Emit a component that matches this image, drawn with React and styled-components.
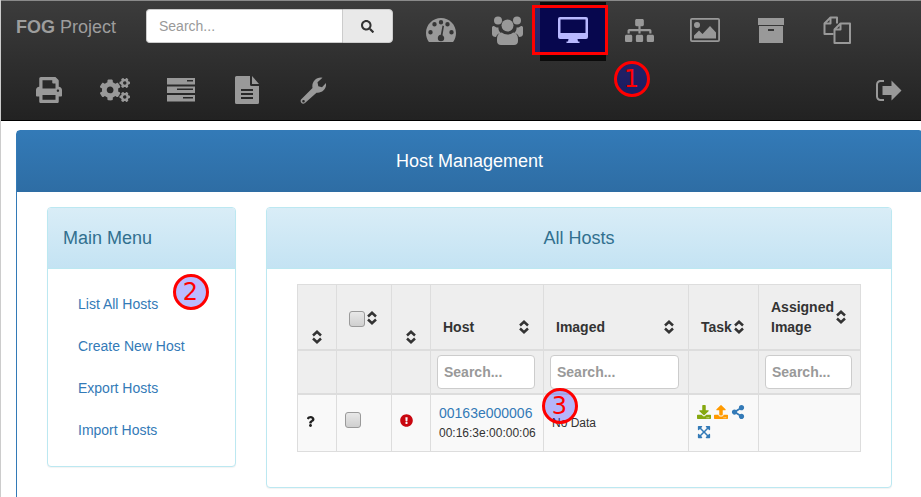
import React from 'react';
import styled, { createGlobalStyle } from 'styled-components';
import {
  FaSearch, FaSitemap, FaPrint, FaCogs,
  FaQuestion, FaExclamationCircle, FaDownload, FaUpload, FaShareAlt, FaExpandArrowsAlt,
} from 'react-icons/fa';

const GlobalStyle = createGlobalStyle`
  html, body { margin: 0; padding: 0; background: #fff; }
  body {
    width: 921px;
    height: 497px;
    overflow: hidden;
    font-family: "Liberation Sans", Arial, sans-serif;
    font-size: 14px;
    color: #333;
  }
  * { box-sizing: border-box; }
`;

const Page = styled.div`
  position: relative;
  width: 921px;
  height: 497px;
  overflow: hidden;
  border-left: 1px solid #ccc;
`;

const Navbar = styled.nav`
  height: 121px;
  border-top: 1px solid #8a8a8a;
  border-bottom: 1px solid #000;
  background: linear-gradient(to bottom, #3c3c3c 0, #222 100%);
`;

const NavRow = styled.div`
  display: flex;
  height: 60px;
  padding-left: ${p => p.$indent || 0}px;
`;

const Brand = styled.a`
  flex: none;
  width: 145px;
  padding: 16px 0 0 15px;
  font-size: 18px;
  line-height: 20px;
  color: #9d9d9d;
  b { font-weight: bold; }
`;

const SearchGroup = styled.div`
  flex: none;
  display: flex;
  width: 247px;
  height: 34px;
  margin: 8px 15px 0 0;
`;

const SearchInput = styled.input`
  width: 196px;
  height: 34px;
  padding: 6px 12px;
  border: 1px solid #ccc;
  border-right: 0;
  border-radius: 4px 0 0 4px;
  background: #fff;
  font: 14px "Liberation Sans", Arial, sans-serif;
  outline: none;
  &::placeholder { color: #999; opacity: 1; }
`;

const SearchButton = styled.button`
  width: 51px;
  height: 34px;
  padding: 0;
  border: 1px solid #ccc;
  border-radius: 0 4px 4px 0;
  background: #e9e9e9;
  color: #333;
  font-size: 13px;
  display: flex;
  align-items: center;
  justify-content: center;
`;

const NavItem = styled.a`
  flex: none;
  width: 66px;
  height: 59px;
  margin-top: 1px;
  padding-bottom: 3px;
  display: flex;
  align-items: center;
  justify-content: center;
  color: ${p => (p.$active ? '#fff' : '#999')};
  background: ${p => (p.$active ? '#0a0a0a' : 'transparent')};
`;

const LogoutItem = styled(NavItem)`
  margin-left: auto;
  width: 64px;
`;

const Content = styled.main`
  padding: 9px 0 0 15px;
`;

const MainPanel = styled.section`
  width: 907px;
  border: 1px solid #337ab7;
  border-radius: 4px 4px 0 0;
  height: 400px;
`;

const MainHeading = styled.h1`
  margin: 0;
  height: 61px;
  line-height: 60px;
  text-align: center;
  font-size: 18px;
  font-weight: normal;
  color: #fff;
  background: linear-gradient(to bottom, #337ab7 0, #2e6da4 100%);
`;

const Columns = styled.div`
  display: flex;
  align-items: flex-start;
  gap: 30px;
  padding: 15px 0 0 30px;
`;

const InfoPanel = styled.div`
  width: ${p => p.$width}px;
  flex: none;
  border: 1px solid #bce8f1;
  border-radius: 4px;
  background: #fff;
  box-shadow: 0 1px 1px rgba(0, 0, 0, .05);
  overflow: hidden;
`;

const InfoHeading = styled.h2`
  margin: 0;
  height: 61px;
  padding: 0 15px;
  line-height: 60px;
  font-size: 18px;
  font-weight: normal;
  color: #31708f;
  text-align: ${p => p.$align || 'left'};
  background: linear-gradient(to bottom, #d9edf7 0, #c4e3f3 100%);
  border-bottom: 1px solid #bce8f1;
`;

const MenuList = styled.ul`
  list-style: none;
  margin: 0;
  padding: 14px 15px 15px;
`;

const MenuLink = styled.a`
  display: block;
  padding: 11px 15px;
  line-height: 20px;
  color: #337ab7;
`;

const TableWrap = styled.div`
  padding: 15px 30px 35px;
`;

const HostTable = styled.table`
  width: 563px;
  table-layout: fixed;
  border-collapse: collapse;
`;

const HeadCell = styled.th`
  height: ${p => p.$height}px;
  padding: ${p => p.$pad || '0 8px'};
  border: 1px solid #ddd;
  border-bottom-width: 2px;
  background: #eee;
  vertical-align: ${p => p.$valign || 'bottom'};
  text-align: left;
  color: #333;
`;

const SortLabel = styled.div`
  display: flex;
  align-items: center;
  justify-content: ${p => (p.$tight ? 'flex-start' : 'space-between')};
  gap: 2px;
  padding: 0 ${p => p.$right ?? 6}px 12px 4px;
  line-height: 20px;
  font-size: 14px;
  font-weight: bold;
`;

const IconOnly = styled.div`
  display: flex;
  justify-content: center;
  padding-bottom: 5px;
`;

const CheckHead = styled.div`
  display: flex;
  justify-content: center;
  align-items: flex-start;
  gap: 2px;
  padding: 0 3px 22px 0;
`;

const FilterInput = styled.input`
  display: block;
  width: 100%;
  height: 34px;
  padding: 6px;
  border: 1px solid #ccc;
  border-radius: 4px;
  background: #fff;
  font: bold 14px "Liberation Sans", Arial, sans-serif;
  outline: none;
  &::placeholder { color: #999; opacity: 1; }
`;

const BodyCell = styled.td`
  height: 57px;
  padding: ${p => p.$pad || '8px'};
  border: 1px solid #ddd;
  background: #f9f9f9;
  font-size: 12px;
  line-height: 20px;
  text-align: left;
  vertical-align: middle;
  color: #333;
`;

const Check = styled.input.attrs({ type: 'checkbox' })`
  appearance: none;
  flex: none;
  display: block;
  margin: 0;
  width: 16px;
  height: 16px;
  border: 1px solid #9a9a9a;
  border-radius: 3px;
  background: linear-gradient(to bottom, #e8e8e8, #cfcfcf);
`;

const RowCheck = styled(Check)`
  margin-bottom: 6px;
`;

const HostLink = styled.a`
  display: block;
  font-size: 14px;
  line-height: 20px;
  color: #337ab7;
`;

const TaskIcon = styled.span`
  display: inline-block;
  margin-right: 3px;
  color: ${p => p.$color};
  font-size: 14px;
  line-height: 20px;
  vertical-align: top;
  svg { vertical-align: -1px; }
`;

const RedBox = styled.div`
  position: absolute;
  left: 531px;
  top: 5px;
  width: 76px;
  height: 50px;
  border: 3px solid #f00;
  background: rgba(0, 0, 255, .28);
`;

const Marker = styled.div`
  position: absolute;
  left: ${p => p.$x - 18.5}px;
  top: ${p => p.$y - 18}px;
  width: 36px;
  height: 36px;
  border: 3px solid #f00;
  border-radius: 50%;
  background: rgba(0, 0, 255, .27);
  color: #f00;
  font: 24px/30px "DejaVu Sans", sans-serif;
  text-align: center;
`;

const Gauge = () => (
  <svg width="30" height="24" viewBox="0 0 30 24" fill="currentColor">
    <path fillRule="evenodd" d="M15 0C6.700 0 0 6.700 0 15c0 3.400 1 6.400 2.900 9h24.200C29 21.400 30 18.400 30 15 30 6.700 23.300 0 15 0zM8.500 4a2.200 2.200 0 1 1 0 4.400 2.200 2.200 0 0 1 0-4.400zM15 2a2.200 2.200 0 1 1 0 4.400A2.200 2.200 0 0 1 15 2zM21.500 4a2.200 2.200 0 1 1 0 4.400 2.200 2.200 0 0 1 0-4.400zM4.500 12a2.200 2.200 0 1 1 0 4.400 2.200 2.200 0 0 1 0-4.400zM25.500 12a2.200 2.200 0 1 1 0 4.400 2.200 2.200 0 0 1 0-4.400zM16.500 7.500l1.500.4-1.500 9.300c1 .6 1.700 1.600 1.700 2.800a3.200 3.200 0 1 1-6.400 0c0-1.800 1.300-3.200 3-3.300z" />
  </svg>
);

const Users = () => (
  <svg width="31" height="29" viewBox="0 0 31 29" fill="currentColor">
    <circle cx="6" cy="4.500" r="4" />
    <circle cx="25" cy="4.500" r="4" />
    <circle cx="15.500" cy="9.500" r="6" />
    <path d="M0 11.500c0-1 .8-1.500 2-1.500 1 1 2.500 1.700 4.500 1.500-.3 2 .6 4 2 5.300-2.200.7-3.700 2-4.500 4.200C1.500 20.700 0 20 0 18zM31 11.500c0-1-.8-1.500-2-1.500-1 1-2.500 1.700-4.500 1.500.3 2-.6 4-2 5.300 2.200.7 3.700 2 4.500 4.200 2.500-.3 4-1 4-3zM9.800 16.500c1.500 1.300 3.500 2 5.700 2s4.200-.7 5.700-2c3 .3 4.800 2.500 4.800 7v1.500c0 2.500-1.500 4-4 4H9c-2.500 0-4-1.500-4-4v-1.500c0-4.500 1.800-6.700 4.800-7z" />
  </svg>
);

const Desktop = () => (
  <svg width="30" height="26" viewBox="0 0 30 26" fill="currentColor">
    <path fillRule="evenodd" d="M2 0h26a2 2 0 0 1 2 2v18a2 2 0 0 1-2 2H19.500l.5 2.500h1.500V26h-13v-1.500H10l.5-2.500H2a2 2 0 0 1-2-2V2a2 2 0 0 1 2-2zM2.500 2.500V16h25V2.500z" />
  </svg>
);

const ImageIcon = () => (
  <svg width="30" height="24" viewBox="0 0 30 24" fill="currentColor">
    <path fillRule="evenodd" d="M2 0h26a2 2 0 0 1 2 2v20a2 2 0 0 1-2 2H2a2 2 0 0 1-2-2V2a2 2 0 0 1 2-2zM1.800 1.800v20.400h26.400V1.800z" />
    <circle cx="7" cy="7" r="3" />
    <path d="M4 20.500v-3l5-5 3.500 3.500L20 8l6 6.500v6z" />
  </svg>
);

const ArchiveIcon = () => (
  <svg width="26" height="25" viewBox="0 0 26 25" fill="currentColor">
    <path fillRule="evenodd" d="M0 0h26v7H0zM1 8h24v17H1zM10 11v2h6v-2z" />
  </svg>
);

const Files = () => (
  <svg width="28" height="28" viewBox="0 0 28 28" fill="none" stroke="currentColor" strokeWidth="2" strokeLinejoin="round">
    <path d="M10.500 18H1.500V7.500L7.500 1.500H14v6" />
    <path d="M7.500 1.500V7.500H1.500" />
    <path d="M11.500 13.500L17.500 7.500H27V27H11.500z" />
    <path d="M17.500 7.500V13.500H11.500" />
  </svg>
);

const ServerIcon = () => (
  <svg width="28" height="24" viewBox="0 0 28 24" fill="currentColor">
    <path fillRule="evenodd" d="M0 0h28v6.500H0zM20 2v1.500h6V2zM0 8.500h28V15H0zM10 10.500V12h16v-1.500zM0 17h28v6.500H0zM16 19v1.500h10V19z" />
  </svg>
);

const FileText = () => (
  <svg width="24" height="28" viewBox="0 0 24 28" fill="currentColor">
    <path fillRule="evenodd" d="M1.500 0H15v8.500a1.500 1.500 0 0 0 1.500 1.500H24v16.500a1.500 1.500 0 0 1-1.500 1.500h-21A1.500 1.500 0 0 1 0 26.500v-25A1.500 1.500 0 0 1 1.500 0zM6 13v2h12v-2zM6 17v2h12v-2zM6 21v2h12v-2z" />
    <path d="M17 0l7 8h-7z" />
  </svg>
);

const Wrench = () => (
  <svg width="26" height="27" viewBox="0 0 26 27" fill="currentColor">
    <path fillRule="evenodd" d="M1 22.500L12.500 11C11.500 6 15 .5 21 .5l1.500.3-5 4.500.8 4 3.700 1L26 6c.8 5.500-3.500 10.500-9.500 9.700L5 26q-2 1.500-3.500 0T1 22.500zM3.500 23a1.300 1.300 0 1 0 0 2.600 1.300 1.300 0 0 0 0-2.600z" />
  </svg>
);

const SignOut = () => (
  <svg width="26" height="21" viewBox="0 0 26 21" fill="currentColor">
    <path d="M8 0v2H4.500C3.200 2 2 3 2 4.500v12C2 18 3.200 19 4.500 19H8v2H4.500C2 21 0 19 0 16.500v-12C0 2 2 0 4.500 0z" />
    <path d="M15.500 0.500L25.500 10.500 15.500 20.500V15H6.500V6h9z" />
  </svg>
);

const Sort = () => (
  <svg width="10" height="14" viewBox="0 0 10 14" fill="none" stroke="#333" strokeWidth="2.500" style={{ flex: 'none' }}>
    <path d="M1 5.500l4-3.700 4 3.700M1 8.500l4 3.700 4-3.700" />
  </svg>
);

const navRowOne = [
  <Gauge key="g" />, <Users key="u" />, <Desktop key="d" />, <FaSitemap key="s" size={29} />,
  <ImageIcon key="i" />, <ArchiveIcon key="a" />, <Files key="f" />,
];
const navRowTwo = [
  <FaPrint key="p" size={26} />, <FaCogs key="c" size={30} />, <ServerIcon key="v" />,
  <FileText key="t" />, <Wrench key="w" />,
];
const menuItems = ['List All Hosts', 'Create New Host', 'Export Hosts', 'Import Hosts'];

export default function App() {
  return (
    <Page>
      <GlobalStyle />
      <Navbar>
        <NavRow>
          <Brand><b>FOG</b> Project</Brand>
          <SearchGroup>
            <SearchInput placeholder="Search..." />
            <SearchButton><FaSearch /></SearchButton>
          </SearchGroup>
          {navRowOne.map((icon, i) => (
            <NavItem key={i} $active={i === 2}>{icon}</NavItem>
          ))}
        </NavRow>
        <NavRow $indent={15}>
          {navRowTwo.map((icon, i) => (
            <NavItem key={i}>{icon}</NavItem>
          ))}
          <LogoutItem><SignOut /></LogoutItem>
        </NavRow>
      </Navbar>
      <Content>
        <MainPanel>
          <MainHeading>Host Management</MainHeading>
          <Columns>
            <InfoPanel $width={189}>
              <InfoHeading>Main Menu</InfoHeading>
              <MenuList>
                {menuItems.map(item => (
                  <li key={item}><MenuLink>{item}</MenuLink></li>
                ))}
              </MenuList>
            </InfoPanel>
            <InfoPanel $width={626}>
              <InfoHeading $align="center">All Hosts</InfoHeading>
              <TableWrap>
                <HostTable>
                  <colgroup>
                    <col width="39" /><col width="55" /><col width="39" /><col width="113" />
                    <col width="145" /><col width="70" /><col width="102" />
                  </colgroup>
                  <thead>
                    <tr>
                      <HeadCell $height={65} $pad="0"><IconOnly><Sort /></IconOnly></HeadCell>
                      <HeadCell $pad="0"><CheckHead><Check /><Sort /></CheckHead></HeadCell>
                      <HeadCell $pad="0"><IconOnly><Sort /></IconOnly></HeadCell>
                      <HeadCell><SortLabel>Host<Sort /></SortLabel></HeadCell>
                      <HeadCell><SortLabel>Imaged<Sort /></SortLabel></HeadCell>
                      <HeadCell><SortLabel $tight $right={0}>Task<Sort /></SortLabel></HeadCell>
                      <HeadCell><SortLabel><span>Assigned<br />Image</span><Sort /></SortLabel></HeadCell>
                    </tr>
                    <tr>
                      <HeadCell $height={44} />
                      <HeadCell />
                      <HeadCell />
                      <HeadCell $pad="0 8px 0 6px" $valign="middle"><FilterInput placeholder="Search..." /></HeadCell>
                      <HeadCell $pad="0 9px 0 6px" $valign="middle"><FilterInput placeholder="Search..." /></HeadCell>
                      <HeadCell />
                      <HeadCell $pad="0 8px 0 6px" $valign="middle"><FilterInput placeholder="Search..." /></HeadCell>
                    </tr>
                  </thead>
                  <tbody>
                    <tr>
                      <BodyCell $pad="8px 8px 8px 7px"><FaQuestion size={11} color="#222" /></BodyCell>
                      <BodyCell><RowCheck /></BodyCell>
                      <BodyCell><FaExclamationCircle size={13} color="#c9060f" /></BodyCell>
                      <BodyCell>
                        <HostLink>00163e000006</HostLink>
                        00:16:3e:00:00:06
                      </BodyCell>
                      <BodyCell>No Data</BodyCell>
                      <BodyCell>
                        <TaskIcon $color="#86a80f"><FaDownload /></TaskIcon>
                        <TaskIcon $color="#ff9a00"><FaUpload /></TaskIcon>
                        <TaskIcon $color="#337ab7"><FaShareAlt /></TaskIcon>
                        <TaskIcon $color="#337ab7"><FaExpandArrowsAlt /></TaskIcon>
                      </BodyCell>
                      <BodyCell />
                    </tr>
                  </tbody>
                </HostTable>
              </TableWrap>
            </InfoPanel>
          </Columns>
        </MainPanel>
      </Content>
      <RedBox />
      <Marker $x={631} $y={79}>1</Marker>
      <Marker $x={190} $y={292}>2</Marker>
      <Marker $x={559} $y={406}>3</Marker>
    </Page>
  );
}
